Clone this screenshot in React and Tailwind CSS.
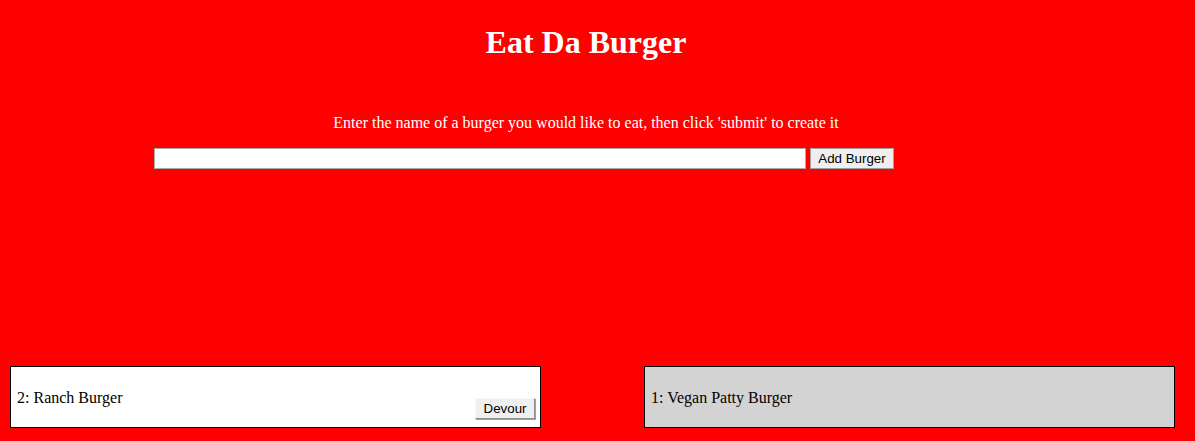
import React, { useState } from "react";

export default function App() {
    const [name, setName] = useState("");
    const [burgers] = useState([
        { id: 2, name: "Ranch Burger", devoured: false },
        { id: 1, name: "Vegan Patty Burger", devoured: true },
    ]);

    return (
        <div className="w-full h-[441px] bg-[#ff0000] font-['Liberation_Serif',serif] overflow-hidden">
            <div className="w-[1172px]">
                <h1 className="pt-[24px] text-center text-[32px] leading-[36px] font-bold text-white">Eat Da Burger</h1>
                <p className="mt-[54px] text-center text-[16px] leading-[18px] text-white">
                    Enter the name of a burger you would like to eat, then click 'submit' to create it
                </p>
                <form className="flex mt-[16px] pl-[154px] gap-[4px]" onSubmit={(e) => e.preventDefault()}>
                    <input
                        type="text"
                        value={name}
                        onChange={(e) => setName(e.target.value)}
                        className="w-[652px] h-[21px] bg-white border border-[#a9a9a9] outline-none"
                    />
                    <button
                        type="submit"
                        className="w-[84px] h-[21px] bg-[#efefef] border border-[#a0a0a0] text-[13.33px] leading-[15px] text-black font-['Liberation_Sans',sans-serif]"
                    >
                        Add Burger
                    </button>
                </form>
            </div>
            <div className="flex mt-[197px] pl-[10px] gap-[103px]">
                {burgers.map((b) => (
                    <div
                        key={b.id}
                        className={`relative flex items-center w-[531px] h-[62px] border border-black pl-[6px] pt-[1px] text-[16px] text-black ${b.devoured ? "bg-[#d3d3d3]" : "bg-white"}`}
                    >
                        <span>{b.id}: {b.name}</span>
                        {!b.devoured && (
                            <button className="absolute right-[5px] bottom-[8px] w-[60px] h-[21px] bg-[#efefef] border border-[#f7f7f7] border-r-[#8f8f8f] border-b-[#8f8f8f] shadow-[1px_1px_0_#a0a0a0] text-[13.33px] leading-[15px] font-['Liberation_Sans',sans-serif]">
                                Devour
                            </button>
                        )}
                    </div>
                ))}
            </div>
        </div>
    );
}
